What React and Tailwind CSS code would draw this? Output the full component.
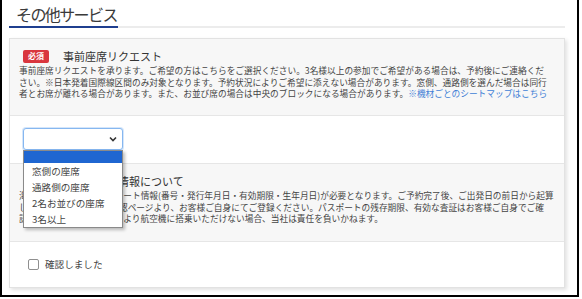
import React from 'react';

const jp = { fontFamily: '"Noto Sans CJK JP", "Noto Sans", sans-serif' };

const Badge = () => (
  <span className="inline-flex items-center justify-center w-[26px] h-[13px] rounded-[2px] bg-[#d9363e] text-white text-[8px] font-bold leading-none">
    必須
  </span>
);

const SeatDropdown = () => {
  const options = ['窓側の座席', '通路側の座席', '2名お並びの座席', '3名以上'];
  return (
    <div className="absolute left-[21px] top-[150px] w-[100px] bg-white border border-[#8a8a8a] shadow-[2px_2px_3px_rgba(0,0,0,0.25)]">
      <div className="h-[12px] bg-[#1f66d1]"></div>
      {options.map((opt) => (
        <div key={opt} className="h-[16px] pl-[8px] flex items-center text-[9.6px] text-[#444] whitespace-nowrap">
          {opt}
        </div>
      ))}
    </div>
  );
};

const App = () => {
  return (
    <div
      className="relative w-[579px] h-[297px] border-l-2 border-r-2 border-b-2 border-black bg-white overflow-hidden"
      style={jp}
    >
      <h2 className="pl-[14px] pt-[3px] h-[26px] text-[16px] leading-[22px] tracking-[-1.6px] text-[#3a3a3a]">
        その他サービス
      </h2>
      <div className="flex ml-[7px] w-[556px]">
        <div className="w-[109px] h-[2px] bg-[#1f3f8f]"></div>
        <div className="flex-1 h-[2px] bg-[#ececec]"></div>
      </div>

      <div className="ml-[7px] mt-[10px] w-[556px] border border-[#e2e2e2] shadow-[2px_2px_4px_rgba(0,0,0,0.12)]">
        {/* seat request */}
        <div className="h-[77px] bg-[#f7f7f7] border-b border-[#e6e6e6] pl-[9px] pt-[9px]">
          <div className="flex items-center gap-[14px] pl-[4px] h-[16px]">
            <Badge />
            <span className="text-[11px] leading-none text-[#333]">事前座席リクエスト</span>
          </div>
          <div className="mt-[1px] text-[8.7px] leading-[11.5px] text-[#444] whitespace-nowrap">
            <div>事前座席リクエストを承ります。ご希望の方はこちらをご選択ください。3名様以上の参加でご希望がある場合は、予約後にご連絡くだ</div>
            <div>さい。※日本発着国際線区間のみ対象となります。予約状況によりご希望に添えない場合があります。窓側、通路側を選んだ場合は同行</div>
            <div>
              者とお席が離れる場合があります。また、お並び席の場合は中央のブロックになる場合があります。
              <span className="text-[#3f7fd6]">※機材ごとのシートマップはこちら</span>
            </div>
          </div>
        </div>

        {/* select */}
        <div className="h-[48px] bg-white border-b border-[#e6e6e6] pl-[13px] pt-[12px]">
          <div className="w-[100px] h-[22px] rounded-[3px] border border-[#86b7f0] bg-white flex items-center justify-end pr-[5px] shadow-[0_0_0_1px_rgba(134,183,240,0.35)]">
            <svg width="8" height="6" viewBox="0 0 8 6">
              <path d="M1 1.5 L4 4.5 L7 1.5" fill="none" stroke="#333" strokeWidth="1.6" />
            </svg>
          </div>
        </div>

        {/* passport */}
        <div className="h-[78px] bg-[#f7f7f7] border-b border-[#e6e6e6] pl-[9px] pt-[9px]">
          <div className="flex items-center gap-[14px] pl-[4px] h-[16px]">
            <Badge />
            <span className="text-[11px] leading-none text-[#333]">パスポート情報について</span>
          </div>
          <div className="mt-[1px] text-[8.7px] leading-[11.5px] text-[#444] whitespace-nowrap">
            <div>海外へのご旅行にはパスポート情報(番号・発行年月日・有効期限・生年月日)が必要となります。ご予約完了後、ご出発日の前日から起算</div>
            <div>して3日前までにご予約確認ページより、お客様ご自身にてご登録ください。パスポートの残存期限、有効な査証はお客様ご自身でご確</div>
            <div>認ください。書類不備等により航空機に搭乗いただけない場合、当社は責任を負いかねます。</div>
          </div>
        </div>

        {/* confirm */}
        <div className="h-[45px] bg-white flex items-center pl-[18px] gap-[6px]">
          <span className="w-[11px] h-[11px] rounded-[2px] border border-[#8f8f8f] bg-white"></span>
          <span className="text-[9.6px] text-[#444]">確認しました</span>
        </div>
      </div>

      <SeatDropdown />
    </div>
  );
};

export default App;
